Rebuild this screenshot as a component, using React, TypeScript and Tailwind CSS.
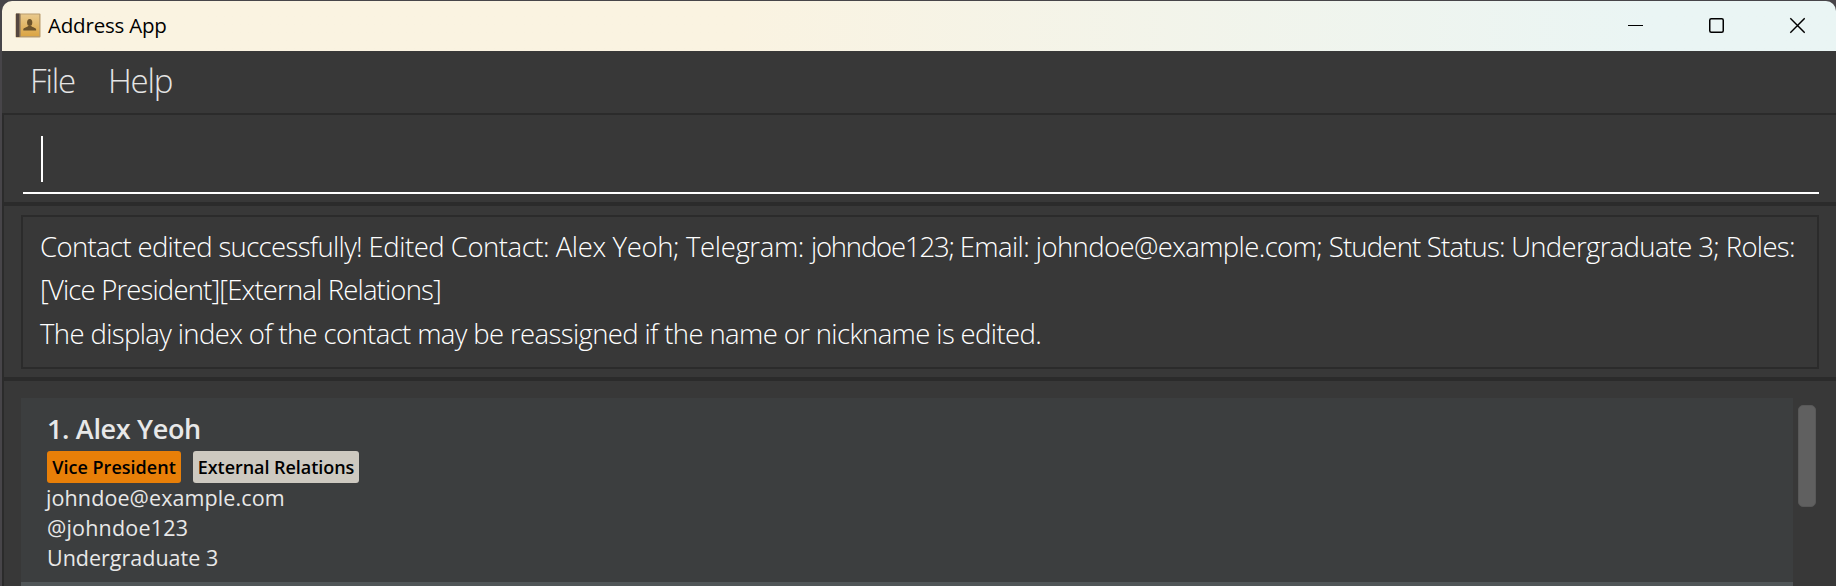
import React from "react";

function BookIcon() {
  return (
    <svg className="block" width="26" height="25" viewBox="0 0 26 25">
      <defs>
        <linearGradient id="cover" x1="0" y1="0" x2="0" y2="1">
          <stop offset="0" stopColor="#e9c98c" />
          <stop offset="1" stopColor="#dba544" />
        </linearGradient>
      </defs>
      <rect x="0.5" y="0.5" width="25" height="24" rx="1" fill="#b99c6c" />
      <rect x="1" y="0.5" width="3.6" height="23.5" fill="#54463f" />
      <rect x="5.5" y="1.5" width="18.7" height="21.5" fill="url(#cover)" />
      <rect x="4.6" y="0.8" width="0.9" height="23" fill="#8d775a" />
      <ellipse cx="14.7" cy="9.6" rx="2.6" ry="3.5" fill="#6b522b" />
      <path d="M8.3 17.6v-1.4c0-1.2 3.4-1.7 5-3.2h2.8c1.6 1.5 5 2 5 3.2v1.4z" fill="#6b522b" />
    </svg>
  );
}

function TitleBar() {
  return (
    <header className="flex h-[50px] shrink-0 items-center rounded-t-[10px] bg-linear-to-r from-[#faf3e1] from-40% to-[#eaf5f4] to-90% pl-[13px]">
      <div className="pb-[2px]">
        <BookIcon />
      </div>
      <h1 className="ml-[7px] pb-px text-[20.5px] tracking-[-0.2px] text-black">Address App</h1>
      <div className="ml-auto flex pr-[31px]">
        <svg className="block" width="182" height="20" viewBox="0 0 182 20" fill="none" stroke="#000">
          <path d="M5 9.5h15" strokeWidth="1" />
          <rect x="86.75" y="2.75" width="13.5" height="13.5" rx="1.5" strokeWidth="1.5" />
          <path d="M167.3 2.3l14.4 14.4M181.7 2.3L167.3 16.7" strokeWidth="1.4" />
        </svg>
      </div>
    </header>
  );
}

function Tag({ label, className }: { label: string; className: string }) {
  return (
    <span className={`flex h-8 items-center justify-center rounded-[3px] text-[18px] font-semibold whitespace-nowrap text-black ${className}`}>
      {label}
    </span>
  );
}

export default function App() {
  return (
    <div className="h-[586px] w-[1836px] overflow-hidden bg-[#474549] pt-px pl-[2px] font-['Open_Sans','Noto_Sans',sans-serif]">
      <div className="flex h-[585px] flex-col">
        <TitleBar />
        <nav className="flex h-[62px] shrink-0 bg-[#383838] pl-[28px] text-[33px] leading-[60px] font-light tracking-[-1.2px] text-[#e4e4e4]">
          <span className="w-[78px]">File</span>
          <span>Help</span>
        </nav>
        <main className="flex min-h-0 grow flex-col border-t-2 border-l-2 border-[#2b2b2b] bg-[#383838]">
          <section className="h-[87px] shrink-0 pt-[21px] pr-[17px] pl-[19px]">
            <div className="h-[58px] border-b-2 border-white pl-[18px]">
              <div className="h-[46px] w-[2px] bg-white" />
            </div>
          </section>
          <section className="h-[179px] shrink-0 border-y-4 border-[#2b2b2b] pt-[9px] pr-[17px] pl-[17px]">
            <div className="h-[154px] border-2 border-[#2b2b2b] pt-[8px] pl-[17px] text-[27.5px] leading-[43.4px] font-light whitespace-nowrap text-white">
              <p>
                <span className="tracking-[-0.646px]">Contact edited successfully! </span>
                <span className="tracking-[-0.476px]">Edited Contact: </span>
                <span className="tracking-[-0.373px]">Alex Yeoh; </span>
                <span className="tracking-[-0.35px]">Telegram: </span>
                <span className="tracking-[-1.2px]">johndoe123; </span>
                <span className="tracking-[-0.585px]">Email: </span>
                <span className="tracking-[-0.613px]">johndoe@example.com; </span>
                <span className="tracking-[-0.8px]">Student Status: </span>
                <span className="tracking-[-0.66px]">Undergraduate 3; Roles:</span>
              </p>
              <p className="tracking-[-0.84px]">[Vice President][External Relations]</p>
              <p className="tracking-[-0.625px]">The display index of the contact may be reassigned if the name or nickname is edited.</p>
            </div>
          </section>
          <section className="flex min-h-0 grow pt-[17px] pl-[17px]">
            <div className="flex w-[1772px] flex-col bg-[#3c3e3f]">
              <article className="h-[184px] shrink-0 pt-[11px] pl-[26px] text-[#e8e8e8]">
                <h2 className="h-[42px] text-[27px] leading-[40px] font-semibold tracking-[-0.33px]">1. Alex Yeoh</h2>
                <div className="flex gap-[12px]">
                  <Tag label="Vice President" className="w-[134px] bg-[#e87f08] tracking-[0.02px]" />
                  <Tag label="External Relations" className="w-[166px] bg-[#cdc9c0] tracking-[-0.05px]" />
                </div>
                <div className="text-[21.5px] leading-[30px]">
                  <p className="-ml-px tracking-[0.1px]">johndoe@example.com</p>
                  <p className="tracking-[0.2px]">@johndoe123</p>
                  <p>Undergraduate 3</p>
                </div>
              </article>
              <div className="h-1 bg-[#515658]" />
            </div>
            <div className="mt-[7px] ml-[5px] h-[102px] w-[18px] rounded-[5px] border border-[#585858] bg-[#606060]" />
          </section>
        </main>
      </div>
    </div>
  );
}
